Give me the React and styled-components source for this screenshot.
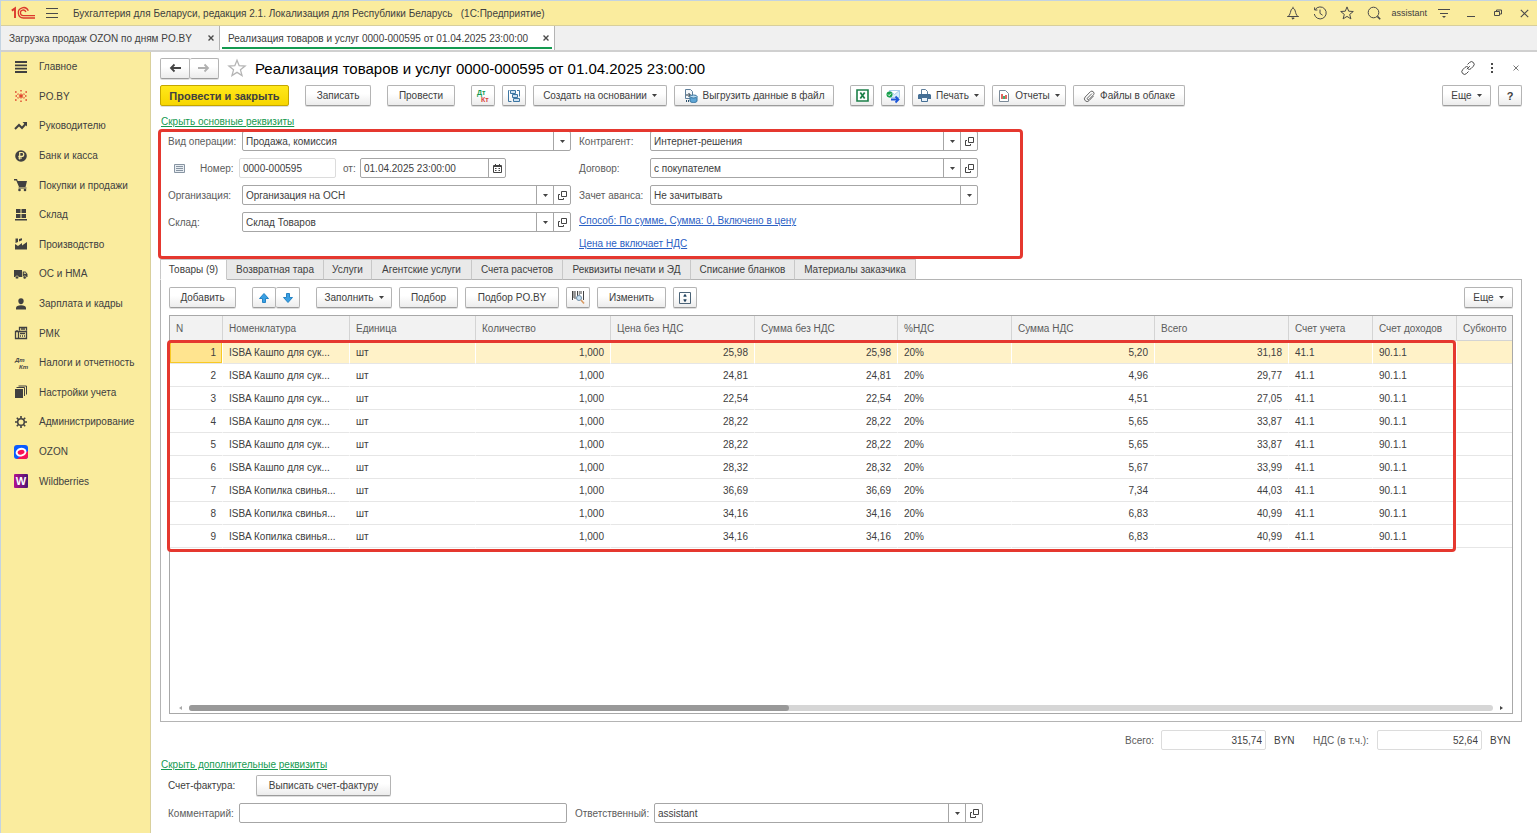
import { useState } from "react";
import styled, { createGlobalStyle, css, ThemeProvider } from "styled-components";

const theme = {
    color: {
        yellow: "#faec9e",
        text: "#404040",
        label: "#5c5c5c",
        line: "#b4b4b4",
        lightLine: "#dcdcdc",
        green: "#149a50",
        blue: "#2b61c4",
        mark: "#e5382f",
    },
    fontSize: {
        xs: "9px",
        sm: "10px",
        base: "11px",
        lg: "15px",
    },
}

const GlobalStyle = createGlobalStyle`
    * {
        box-sizing: border-box;
    }
    body {
        margin: 0;
        background: #fff;
    }
    body, button, input, select, table {
        font-family: "Liberation Sans", Arial, sans-serif;
        font-size: ${({ theme }) => theme.fontSize.sm};
        color: ${({ theme }) => theme.color.text};
    }
`

const Page = styled.div`
    display: flex;
    flex-direction: column;
    min-height: 100vh;
    border-top: 1px solid #c3d3e2;
    border-left: 1px solid #c3d3e2;
`

/* ---------- icons ---------- */

const Svg = styled.svg`
    display: block;
    flex-shrink: 0;
    overflow: visible;
`

const Icon = ({ size = 14, box = 14, children, ...rest }) => {
    return (
        <Svg
            width={size}
            height={size}
            viewBox={`0 0 ${box} ${box}`}
            fill="none"
            stroke="currentColor"
            aria-hidden="true"
            {...rest}
        >
            {children}
        </Svg>
    )
}

const Logo = () => (
    <Svg width="24" height="14" viewBox="0 0 24 14" role="img" aria-label="1С" fill="none" stroke="#dc3a2c">
        <path d="M.8 4.600 4 2.400V12" strokeWidth="1.900" />
        <path d="M17.300 4.800A5.200 5.200 0 1 0 12.400 12H24" strokeWidth="1.300" />
        <path d="M14.900 6A2.800 2.800 0 1 0 12.400 9.600H24" strokeWidth="1.300" />
    </Svg>
)

const BellIcon = () => (
    <Icon>
        <path d="M1.200 10.500h11.600M2.300 10.300C4 8.800 4.200 7 4.800 5 5.300 3.200 5.900 2.500 7 2.500S8.700 3.200 9.200 5c.6 2 .8 3.800 2.500 5.300M7 .8v1.700" />
        <path d="M5.800 12h2.400L7 13.200z" fill="currentColor" />
    </Icon>
)

const HistoryIcon = () => (
    <Icon>
        <path d="M2.200 3.600A6 6 0 1 1 1.300 8M1.600 1.400v2.600h2.800M7 3.600v3.800l2.600 1.800" />
    </Icon>
)

const StarIcon = ({ size }) => (
    <Icon size={size}>
        <path d="m7 .9 1.700 4.300 4.600.3-3.600 2.900 1.200 4.500L7 10.400l-3.900 2.500 1.200-4.500L.7 5.500l4.600-.3z" />
    </Icon>
)

const SearchIcon = () => (
    <Icon>
        <circle cx="6.500" cy="6.500" r="5.300" />
        <path d="m10.400 10.400 2.800 2.800" strokeWidth="1.600" />
    </Icon>
)

const MenuIcon = () => (
    <Icon size={12} box={12}>
        <path d="M0 1.500h12M0 6.500h12M0 10.500h12" />
    </Icon>
)

const UserMenuIcon = () => (
    <Icon size={12} box={12}>
        <path d="M0 2.500h12M2 6.500h8" />
        <path d="M4 9h4l-2 2z" fill="currentColor" stroke="none" />
    </Icon>
)

const MinimizeIcon = () => (
    <Icon size={8} box={8}>
        <path d="M0 7.500h8" />
    </Icon>
)

const RestoreIcon = () => (
    <Icon size={8} box={8}>
        <path d="M.5 2.500h5v4h-5zM2.500 2.500v-1.500h5v4h-2" />
    </Icon>
)

const CloseIcon = ({ size = 8, bold }) => (
    <Icon size={size} box={8} strokeWidth={bold ? 1.8 : 1}>
        <path d="m.7.7 6.600 6.600M7.300.7.700 7.300" />
    </Icon>
)

const LinkIcon = () => (
    <Icon>
        <path d="m5.800 8.200 3-3M6.500 3.500l2-2a2.600 2.600 0 0 1 3.900 3.700L10 7.600a2.400 2.400 0 0 1-3 .4M7.500 10.500l-2 2a2.600 2.600 0 0 1-3.900-3.700L4 6.400a2.400 2.400 0 0 1 3-.4" />
    </Icon>
)

const DotsIcon = () => (
    <Icon size={10} box={10} fill="currentColor" stroke="none">
        <path d="M4 0h2v2H4zM4 4h2v2H4zM4 8h2v2H4z" />
    </Icon>
)

const ArrowIcon = ({ back }) => (
    <Icon size={12} box={12} strokeWidth="1.800" stroke={back ? "#444" : "#b0b0b0"}>
        <path d={back ? "M12 6H2M5.500 2.500 2 6l3.500 3.500" : "M0 6h10M6.500 2.500 10 6 6.500 9.500"} />
    </Icon>
)

const Caret = () => (
    <Icon size={5} box={5}>
        <path d="M0 1h5L2.500 4z" fill="currentColor" stroke="none" />
    </Icon>
)

const OpenIcon = () => (
    <Icon size={9} box={9}>
        <path d="M3.500.500h5v5h-5zM2 3.500H.500v5h5V7" />
    </Icon>
)

const CalendarIcon = () => (
    <Icon size={9} box={9}>
        <path d="M.500 1.500h8v7h-8zM.500 2.500h8M2.500 0v2M6.500 0v2" />
        <path d="M2 4.500h1.500M5.500 4.500H7M2 6.500h1.500M5.500 6.500H7" />
    </Icon>
)

const CardIcon = () => (
    <Icon size={11} box={11} stroke="#8794a2">
        <path d="M.500 1.500h10v8H.500z" fill="#e8edf2" />
        <path d="M2 3.500h7M2 5.500h7M2 7.500h7" />
    </Icon>
)

const DtKtIcon = ({ colored }) => (
    <Icon stroke="none" fontSize={colored ? 7 : 6} fontWeight="700" fontStyle={colored ? "normal" : "italic"}>
        <text x="1" y="6" fill={colored ? "#149a50" : "#444"}>Дт</text>
        <text x="5" y="13" fill={colored ? "#d9403a" : "#444"}>Кт</text>
    </Icon>
)

const StructureIcon = () => (
    <Icon size={12} box={12} stroke="#3d76a3">
        <path d="M2.500.500h5v3h-5zM4.500 4.500h5v3h-5zM5.500 8.500h6v3h-6z" fill="#cfe2f1" />
        <path d="M1.500.500h-1v11h3M9 .500h2.500v6" />
    </Icon>
)

const ExportIcon = () => (
    <Icon>
        <path d="M1.500.500h5l2 2v7h-7z" fill="#f4f7fa" stroke="#5e7f9b" />
        <path d="M2 6h4M4.500 4l2 2-2 2" stroke="#20323f" />
        <path d="M6 7.500v4.500c0 2 7 2 7 0V7.500" fill="#5fa6d6" stroke="#37749f" />
        <ellipse cx="9.500" cy="7.500" rx="3.500" ry="1.500" fill="#b7dbf2" stroke="#37749f" />
        <path d="M2.500 11v2M4.500 11v2" stroke="#2a4f6b" />
    </Icon>
)

const ExcelIcon = () => (
    <Icon size={13} box={13}>
        <path d="M1 1h11v11H1z" fill="#fff" stroke="#1c8049" strokeWidth="1.600" />
        <path d="m4.300 3.500 4.400 6M8.700 3.500l-4.400 6" stroke="#1c8049" strokeWidth="1.800" />
    </Icon>
)

const MailIcon = () => (
    <Icon>
        <path d="M3.500 1.500h10v7h-10zM3.500 1.500l5 4 5-4" fill="#d8ecfb" stroke="#a9cdea" />
        <circle cx="3.500" cy="5.500" r="3" fill="#17a04b" stroke="none" />
        <path d="m2 5.500 1.200 1.200L5 4.500" stroke="#fff" />
        <path d="M5 10.500h7M9.500 7.500l3 3-3 3" stroke="#1d56d8" strokeWidth="1.800" />
    </Icon>
)

const PrinterIcon = () => (
    <Icon size={13} box={13}>
        <path d="M3.500 5V.500h4l2 2V5" fill="#fff" stroke="#5f7f9c" />
        <path d="M1 5h11l1 1v4H0V6z" fill="#456f95" stroke="none" />
        <path d="M3.500 8.500h6v4h-6z" fill="#e9f2fa" stroke="#456f95" />
    </Icon>
)

const ReportIcon = () => (
    <Icon size={12} box={12}>
        <path d="M1.500.500h6l3 3v8h-9z" fill="#fff" stroke="#7b8a98" />
        <path d="M4 4v5" stroke="#d9403a" strokeWidth="1.600" />
        <path d="M6 6v3" stroke="#149a50" strokeWidth="1.600" />
        <path d="M8 5v4" stroke="#d9403a" strokeWidth="1.600" />
    </Icon>
)

const ClipIcon = () => (
    <Icon size={12} box={12} stroke="#666">
        <path d="M9 3.500 4.500 8a1 1 0 0 0 1.500 1.400l4.500-4.600A2.200 2.200 0 0 0 7.400 1.700L2.200 7A2.600 2.600 0 0 0 6 10.700L10.500 6" />
    </Icon>
)

const MoveIcon = ({ down }) => (
    <Icon size={10} box={10}>
        <path
            d={down ? "M3.500.500h3v4h3L5 9.500.500 4.500h3z" : "M3.500 9.500h3v-4h3L5 .500.500 5.500h3z"}
            fill="#3aa0e4"
            stroke="#2583c4"
        />
    </Icon>
)

const BarcodeIcon = () => (
    <Icon size={13} box={13} stroke="#444">
        <path d="M.500 0v9M3 0v8M5.500 0v5M9 0v3M11.500 0v9" />
        <path d="M1.800 0v7M7.300 0v4" strokeWidth=".7" />
        <circle cx="7" cy="7" r="2.500" fill="#cbe4f6" stroke="#6f8ca5" />
        <path d="m9 9 3 3.500" stroke="#d89a62" strokeWidth="1.600" />
    </Icon>
)

const ExpandIcon = () => (
    <Icon size={12} box={12}>
        <path d="M.500.500h11v11H.500z" stroke="#4b6377" />
        <path d="M6 2.500v2.500M6 7v2.500" stroke="#22445f" />
        <path d="M4 4.500 6 2l2 2.500zM4 7.500 6 10l2-2.500z" fill="#22445f" stroke="none" />
    </Icon>
)

const sectionIcons = {
    main: (
        <Icon>
            <path d="M1 2h12M1 5.300h12M1 8.700h12M1 12h12" strokeWidth="1.800" />
        </Icon>
    ),
    po: (
        <Icon stroke="#e0452c">
            <path d="M7 4.500v5M5 5.700l4 2.600M9 5.700 5 8.300" strokeWidth="1.200" />
            <path d="M7 1v1.600M7 11.400V13M1 3h1.600M11.400 3H13M1 11h1.600M11.400 11H13M1.500 7H3M11 7h1.500M3.500 4.800l1 .6M9.500 5.400l1-.6M3.500 9.200l1-.6M9.500 8.600l1 .6" strokeWidth="1.400" />
        </Icon>
    ),
    trend: (
        <Icon>
            <path d="m1 10 4-4 3 3 4-4.500" strokeWidth="2" />
            <path d="M8.500 3H13v4.500z" fill="currentColor" stroke="none" />
        </Icon>
    ),
    bank: (
        <Icon>
            <circle cx="7" cy="7" r="5.800" fill="currentColor" stroke="none" />
            <path d="M5.700 10.500v-7h2.100a1.900 1.900 0 0 1 0 3.900H4.300M4.300 9h3.700" stroke="#faec9e" strokeWidth="1.200" />
        </Icon>
    ),
    cart: (
        <Icon>
            <path d="M0 1h3l.7 2H13l-1.500 6H5L2.300 2.400H0z" fill="currentColor" stroke="none" />
            <path d="M4.500 10h8" />
            <circle cx="5.500" cy="12" r="1.300" fill="currentColor" stroke="none" />
            <circle cx="11" cy="12" r="1.300" fill="currentColor" stroke="none" />
        </Icon>
    ),
    stock: (
        <Icon>
            <path d="M2 1h4.500v4H2zM7.500 1H12v4H7.500zM2 6h4.500v4H2zM7.500 6H12v4H7.500zM1 11h12v1.500H1z" fill="currentColor" stroke="none" />
        </Icon>
    ),
    factory: (
        <Icon>
            <path d="M1 12.500V7l3 2 4-3v2.500L13 5v7.500z" fill="currentColor" stroke="none" />
            <path d="M1.500 1.500h2.500v3.500L1.500 6zM5 2l3-.800v2L5 4.500z" fill="currentColor" stroke="none" />
        </Icon>
    ),
    truck: (
        <Icon>
            <path d="M0 3h8v7H0zM8.700 4.500h2.800L13.500 7v3H8.700z" fill="currentColor" stroke="none" />
            <circle cx="3" cy="10.500" r="1.600" fill="currentColor" stroke="#faec9e" strokeWidth=".6" />
            <circle cx="10.700" cy="10.500" r="1.600" fill="currentColor" stroke="#faec9e" strokeWidth=".6" />
            <path d="M9.800 5.500h1.500l1 1.300H9.800z" fill="#faec9e" stroke="none" />
        </Icon>
    ),
    person: (
        <Icon>
            <path d="M7 1.200c1.900 0 2.700 1.300 2.700 2.900S8.600 7.300 7 7.300 4.300 5.700 4.300 4.100 5.100 1.200 7 1.200zM2 12.500V11c0-1.800 2-2.800 5-2.800s5 1 5 2.800v1.500z" fill="currentColor" stroke="none" />
        </Icon>
    ),
    register: (
        <Icon>
            <path d="M5.500 4.500v-3h7v3M1.500 5.500h11v7h-11zM4.500 5.500v7M3 4v1.500" strokeWidth="1.300" />
            <path d="M6 7.500h5M6 10h1M8 10h1M10 10h1M7 3h4" strokeWidth="1.400" />
        </Icon>
    ),
    taxes: <DtKtIcon />,
    books: (
        <Icon>
            <path d="M1 4h8v9H1z" fill="currentColor" stroke="none" />
            <path d="M2.500 2.500h8V11M4.500 1h8v8.500" />
        </Icon>
    ),
    gear: (
        <Icon>
            <circle cx="7" cy="7" r="3.300" strokeWidth="1.500" />
            <path d="M7 1v2M7 11v2M1 7h2M11 7h2M2.800 2.800l1.400 1.400M9.800 9.800l1.400 1.400M11.200 2.800 9.800 4.200M4.200 9.800l-1.400 1.400" strokeWidth="1.600" />
        </Icon>
    ),
    ozon: (
        <Icon>
            <rect width="14" height="14" rx="3" fill="#0a5bff" stroke="none" />
            <path d="M14 6v5a3 3 0 0 1-3 3H3l4-3z" fill="#f91155" stroke="none" />
            <ellipse cx="7" cy="7.200" rx="4.500" ry="3.300" fill="#f91155" stroke="#fff" strokeWidth="2" transform="rotate(-15 7 7)" />
        </Icon>
    ),
    wb: (
        <Icon>
            <defs>
                <linearGradient id="wb" x1="0" x2="1">
                    <stop offset="0" stopColor="#b3128f" />
                    <stop offset="1" stopColor="#4a1673" />
                </linearGradient>
            </defs>
            <rect width="14" height="14" rx="1" fill="url(#wb)" stroke="none" />
            <text x="7" y="11" fontSize="11" fontWeight="700" textAnchor="middle" fill="#fff" stroke="none">W</text>
        </Icon>
    ),
}

/* ---------- window header ---------- */

const TopBar = styled.header`
    display: flex;
    align-items: center;
    height: 25px;
    padding-left: 10px;
    background: ${({ theme }) => theme.color.yellow};
    border-bottom: 1px solid #d8cf9c;
`

const IconButton = styled.button`
    display: flex;
    align-items: center;
    justify-content: center;
    width: ${({ $w }) => $w || 27}px;
    height: 22px;
    padding: 0;
    border: 0;
    background: none;
    color: #4a4a4a;
`

const AppTitle = styled.div`
    flex: 1;
    padding-left: 4px;
    white-space: pre;
`

const UserName = styled.span`
    padding: 0 3px 0 4px;
    font-size: ${({ theme }) => theme.fontSize.xs};
`

const DocTabs = styled.nav`
    display: flex;
    height: 26px;
    background: #f0f0f0;
    border-bottom: 2px solid #d0d0d0;
`

const DocTab = styled.div`
    display: flex;
    align-items: center;
    justify-content: space-between;
    width: ${({ $w }) => $w}px;
    height: 24px;
    padding: 0 5px 0 8px;
    border-right: 1px solid ${({ theme }) => theme.color.line};
    white-space: nowrap;
    ${({ $active, theme }) => $active && css`
        background: linear-gradient(${theme.color.green}, ${theme.color.green}) center bottom 1px / calc(100% - 4px) 2px no-repeat #fff;
    `}
    a {
        color: inherit;
        text-decoration: none;
    }
    button {
        width: 7px;
    }
`

/* ---------- sections ---------- */

const Body = styled.div`
    display: flex;
    flex: 1;
`

const Sidebar = styled.aside`
    flex: 0 0 150px;
    background: ${({ theme }) => theme.color.yellow};
    border-right: 1px solid #d9d09c;
`

const SectionList = styled.nav`
    display: grid;
    grid-auto-rows: 1fr;
    height: 444px;
`

const SectionLink = styled.a`
    display: flex;
    align-items: center;
    gap: 11px;
    padding-left: 13px;
    color: ${({ theme }) => theme.color.text};
    text-decoration: none;
    white-space: nowrap;
`

/* ---------- form ---------- */

const Main = styled.main`
    display: flex;
    flex: 1;
    flex-direction: column;
    min-width: 0;
    padding: 5px 15px 10px 9px;
`

const TitleRow = styled.div`
    display: flex;
    align-items: center;
    height: 22px;
    margin-right: -6px;
`

const Title = styled.h1`
    flex: 1;
    margin: 0;
    font-size: ${({ theme }) => theme.fontSize.lg};
    font-weight: 400;
    color: #000;
`

const FavoriteButton = styled(IconButton)`
    width: 36px;
    color: #b5b5b5;
`

const CommandBar = styled.div`
    display: flex;
    gap: 16px;
    margin-top: 6px;
`

const Group = styled.div`
    display: flex;
    gap: ${({ $joined }) => ($joined ? 0 : 7)}px;
    margin-left: ${({ $right }) => ($right ? "auto" : 0)};
`

const Button = styled.button`
    display: flex;
    align-items: center;
    justify-content: center;
    gap: 5px;
    width: ${({ $w }) => $w || 24}px;
    height: 21px;
    padding: 0;
    border: 1px solid ${({ theme }) => theme.color.line};
    border-bottom-color: #9c9c9c;
    border-left-width: ${({ $inner }) => ($inner ? 0 : 1)}px;
    border-radius: 2px;
    background: linear-gradient(#fff 40%, #ececec);
    box-shadow: 0 1px 0 #dedede;
    white-space: nowrap;
    ${({ $primary }) => $primary && css`
        border-color: #c4a600;
        background: linear-gradient(#ffe81a, #f7d600);
        font-size: ${({ theme }) => theme.fontSize.base};
        font-weight: 700;
    `}
`

const HelpMark = styled.b`
    font-size: ${({ theme }) => theme.fontSize.base};
`

const CommandLink = styled.div`
    display: flex;
    margin-top: 9px;
`

const ToggleLink = styled.a`
    align-self: flex-start;
    margin-left: 1px;
    line-height: 14px;
    color: ${({ theme }) => theme.color.green};
`

const ParamLink = styled.a`
    line-height: 14px;
    color: ${({ theme }) => theme.color.blue};
`

const marked = css`
    position: absolute;
    border: 3px solid ${({ theme }) => theme.color.mark};
    border-radius: 4px;
    pointer-events: none;
    content: "";
`

const Params = styled.section`
    position: relative;
    display: flex;
    align-self: flex-start;
    gap: 8px;
    margin-top: 2px;
    padding: 0 45px 8px 8px;
    &::after {
        ${marked}
        inset: -2px 0 0 -2px;
    }
`

const ParamColumn = styled.div`
    display: flex;
    flex-direction: column;
    gap: 7px;
    width: ${({ $w }) => $w}px;
`

const ParamLinks = styled.div`
    display: flex;
    flex-direction: column;
    align-items: flex-start;
    gap: 9px;
    padding-top: 2px;
`

const Row = styled.div`
    display: flex;
    align-items: center;
`

const Label = styled.label`
    flex-shrink: 0;
    width: ${({ $w }) => ($w ? `${$w}px` : "auto")};
    color: ${({ theme }) => theme.color.label};
    white-space: nowrap;
`

const Field = styled.div`
    display: flex;
    flex: ${({ $w }) => ($w ? `0 0 ${$w}px` : 1)};
    min-width: 0;
    height: 20px;
    border: 1px solid ${({ theme, $light }) => ($light ? theme.color.lightLine : "#a6a6a6")};
    border-radius: 2px;
    background: #fff;
    input, select {
        flex: 1;
        min-width: 0;
        padding: 0 3px;
        border: 0;
        outline: 0;
        background: none;
        appearance: none;
        text-align: ${({ $right }) => ($right ? "right" : "left")};
    }
`

const fieldCell = css`
    display: flex;
    align-items: center;
    justify-content: center;
    width: 17px;
    padding: 0;
    border: 0;
    border-left: 1px solid #a6a6a6;
    background: none;
    color: #444;
`

const FieldArrow = styled.span`
    ${fieldCell}
`

const FieldButton = styled.button`
    ${fieldCell}
`

const NumberLabel = styled(Label)`
    display: flex;
    align-items: center;
    gap: 15px;
    padding-left: 6px;
`

const DateLabel = styled(Label)`
    padding-left: 7px;
`

const SelectField = ({ id, value, open, width }) => {
    return (
        <Field $w={width}>
            <select id={id} defaultValue={value}>
                <option>{value}</option>
            </select>
            <FieldArrow aria-hidden="true"><Caret /></FieldArrow>
            {open && <FieldButton type="button" aria-label="Открыть"><OpenIcon /></FieldButton>}
        </Field>
    )
}

/* ---------- tabular part ---------- */

const Tabs = styled.div`
    z-index: 1;
    display: flex;
`

const Tab = styled.button`
    width: ${({ $w }) => $w}px;
    height: 21px;
    padding: 0;
    border: 1px solid #c8c8c8;
    border-left-width: ${({ $active }) => ($active ? 1 : 0)}px;
    border-bottom-color: ${({ theme, $active }) => ($active ? "#fff" : theme.color.line)};
    background: ${({ $active }) => ($active ? "#fff" : "#e9e9e9")};
    white-space: nowrap;
`

const Panel = styled.section`
    display: flex;
    flex: 1;
    flex-direction: column;
    margin-top: -1px;
    padding: 7px 8px;
    border: 1px solid ${({ theme }) => theme.color.line};
`

const PanelBar = styled.div`
    display: flex;
    gap: 16px;
`

const Grid = styled.div`
    position: relative;
    display: flex;
    flex: 1;
    flex-direction: column;
    min-height: 260px;
    margin-top: 7px;
    border: 1px solid #a8a8a8;
`

const RowsMark = styled.div`
    ${marked}
    top: 24px;
    left: -3px;
    width: 1289px;
    height: 212px;
`

const TableWrap = styled.div`
    flex: 1;
    overflow: hidden;
`

const Table = styled.table`
    width: 100%;
    table-layout: fixed;
    border-collapse: separate;
    border-spacing: 0;
    th, td {
        overflow: hidden;
        padding: 0 0 0 6px;
        font-weight: 400;
        text-align: left;
        text-overflow: ellipsis;
        white-space: nowrap;
    }
    th {
        height: 25px;
        border-right: 1px solid #d4d4d4;
        border-bottom: 1px solid #d4d4d4;
        background: #f2f2f2;
        color: ${({ theme }) => theme.color.label};
    }
    th:last-child, td:last-child {
        border-right: 0;
    }
`

const Line = styled.tr`
    td {
        height: 23px;
        border-bottom: 1px solid #e6e6e6;
        border-right: 1px solid #fff;
        background: ${({ $selected }) => ($selected ? "#fff2c8" : "#fff")};
    }
    td:first-child {
        ${({ $selected }) => $selected && css`
            background: #ffe48f;
            box-shadow: inset 0 0 0 1px #f8c923;
        `}
    }
`

const Cell = styled.td`
    && {
        padding-right: ${({ $num }) => ($num ? 6 : 0)}px;
        text-align: ${({ $num }) => ($num ? "right" : "left")};
    }
`

const ScrollRow = styled.div`
    display: flex;
    align-items: center;
    gap: 7px;
    height: 11px;
    padding: 0 7px;
`

const ScrollTrack = styled.div`
    flex: 1;
    height: 6px;
    border-radius: 3px;
    background: #d6d6d6;
`

const ScrollThumb = styled.div`
    width: 46%;
    height: 6px;
    border-radius: 3px;
    background: #999;
`

const ScrollArrow = styled.span`
    border: 2px solid transparent;
    border-${({ $side }) => $side}: 3px solid ${({ $side }) => ($side === "left" ? "#444" : "#aaa")};
`

/* ---------- footer ---------- */

const Totals = styled.div`
    display: flex;
    align-items: center;
    justify-content: flex-end;
    gap: 5px;
    margin: 8px 0;
    padding-right: 10px;
`

const Currency = styled.span`
    width: 37px;
    padding-left: 3px;
    &:last-child {
        width: 25px;
    }
`

const Footer = styled.footer`
    display: flex;
    flex-direction: column;
    gap: 7px;
    margin-top: 3px;
`

const FooterRow = styled(Row)`
    padding-left: 8px;
`

const InvoiceLabel = styled.span`
    width: 88px;
`

const ResponsibleLabel = styled(Label)`
    padding-left: 8px;
`

const sections = [
    ["main", "Главное"],
    ["po", "PO.BY"],
    ["trend", "Руководителю"],
    ["bank", "Банк и касса"],
    ["cart", "Покупки и продажи"],
    ["stock", "Склад"],
    ["factory", "Производство"],
    ["truck", "ОС и НМА"],
    ["person", "Зарплата и кадры"],
    ["register", "РМК"],
    ["taxes", "Налоги и отчетность"],
    ["books", "Настройки учета"],
    ["gear", "Администрирование"],
    ["ozon", "OZON"],
    ["wb", "Wildberries"],
]

const tabs = [
    ["Товары (9)", 67],
    ["Возвратная тара", 97],
    ["Услуги", 48],
    ["Агентские услуги", 100],
    ["Счета расчетов", 91],
    ["Реквизиты печати и ЭД", 128],
    ["Списание бланков", 104],
    ["Материалы заказчика", 121],
]

const columns = [
    { title: "N", width: 53, num: true },
    { title: "Номенклатура", width: 127 },
    { title: "Единица", width: 126 },
    { title: "Количество", width: 135, num: true },
    { title: "Цена без НДС", width: 144, num: true },
    { title: "Сумма без НДС", width: 143, num: true },
    { title: "%НДС", width: 114 },
    { title: "Сумма НДС", width: 143, num: true },
    { title: "Всего", width: 134, num: true },
    { title: "Счет учета", width: 84 },
    { title: "Счет доходов", width: 84 },
    { title: "Субконто" },
]

const pot = "ISBA Кашпо для сук..."
const pig = "ISBA Копилка свинья..."

// name, price, vat, total
const goods = [
    [pot, "25,98", "5,20", "31,18"],
    [pot, "24,81", "4,96", "29,77"],
    [pot, "22,54", "4,51", "27,05"],
    [pot, "28,22", "5,65", "33,87"],
    [pot, "28,22", "5,65", "33,87"],
    [pot, "28,32", "5,67", "33,99"],
    [pig, "36,69", "7,34", "44,03"],
    [pig, "34,16", "6,83", "40,99"],
    [pig, "34,16", "6,83", "40,99"],
]

const GoodsTable = () => {
    const [selected, setSelected] = useState(0);

    return (
        <TableWrap>
            <Table>
                <colgroup>
                    {columns.map((column) => (
                        <col key={column.title} width={column.width} />
                    ))}
                </colgroup>
                <thead>
                    <tr>
                        {columns.map((column) => (
                            <th key={column.title} scope="col">{column.title}</th>
                        ))}
                    </tr>
                </thead>
                <tbody>
                    {goods.map(([name, price, vat, total], index) => {
                        const cells = [index + 1, name, "шт", "1,000", price, price, "20%", vat, total, "41.1", "90.1.1", ""]
                        return (
                            <Line key={index} $selected={index === selected} onClick={() => setSelected(index)}>
                                {cells.map((cell, i) => (
                                    <Cell key={i} $num={columns[i].num}>{cell}</Cell>
                                ))}
                            </Line>
                        )
                    })}
                </tbody>
            </Table>
        </TableWrap>
    )
}

const App = () => {
    const [activeTab, setActiveTab] = useState(0);

    return (
        <ThemeProvider theme={theme}>
            <GlobalStyle />
            <Page>
                <TopBar>
                    <Logo />
                    <IconButton $w={34} aria-label="Меню"><MenuIcon /></IconButton>
                    <AppTitle>{"Бухгалтерия для Беларуси, редакция 2.1. Локализация для Республики Беларусь   (1С:Предприятие)"}</AppTitle>
                    <IconButton aria-label="Уведомления"><BellIcon /></IconButton>
                    <IconButton aria-label="История"><HistoryIcon /></IconButton>
                    <IconButton aria-label="Избранное"><StarIcon /></IconButton>
                    <IconButton aria-label="Поиск"><SearchIcon /></IconButton>
                    <UserName>assistant</UserName>
                    <IconButton aria-label="Настройки"><UserMenuIcon /></IconButton>
                    <IconButton aria-label="Свернуть"><MinimizeIcon /></IconButton>
                    <IconButton aria-label="Развернуть"><RestoreIcon /></IconButton>
                    <IconButton $w={26} aria-label="Закрыть"><CloseIcon size={9} /></IconButton>
                </TopBar>

                <DocTabs>
                    <DocTab $w={219}>
                        <a href="#load">Загрузка продаж OZON по дням PO.BY</a>
                        <IconButton aria-label="Закрыть вкладку"><CloseIcon size={6} bold /></IconButton>
                    </DocTab>
                    <DocTab $w={335} $active>
                        <a href="#sale">Реализация товаров и услуг 0000-000595 от 01.04.2025 23:00:00</a>
                        <IconButton aria-label="Закрыть вкладку"><CloseIcon size={6} bold /></IconButton>
                    </DocTab>
                </DocTabs>

                <Body>
                    <Sidebar>
                        <SectionList>
                            {sections.map(([icon, name]) => (
                                <SectionLink key={icon} href={`#${icon}`}>
                                    {sectionIcons[icon]}
                                    {name}
                                </SectionLink>
                            ))}
                        </SectionList>
                    </Sidebar>

                    <Main>
                        <TitleRow>
                            <Group $joined>
                                <Button $w={30} aria-label="Назад"><ArrowIcon back /></Button>
                                <Button $w={29} $inner aria-label="Вперед"><ArrowIcon /></Button>
                            </Group>
                            <FavoriteButton aria-label="В избранное"><StarIcon size={18} /></FavoriteButton>
                            <Title>Реализация товаров и услуг 0000-000595 от 01.04.2025 23:00:00</Title>
                            <IconButton $w={24} aria-label="Ссылка"><LinkIcon /></IconButton>
                            <IconButton $w={24} aria-label="Еще"><DotsIcon /></IconButton>
                            <IconButton $w={24} aria-label="Закрыть"><CloseIcon size={6} /></IconButton>
                        </TitleRow>

                        <CommandBar>
                            <Button $w={129} $primary>Провести и закрыть</Button>
                            <Button $w={66}>Записать</Button>
                            <Button $w={68}>Провести</Button>
                            <Group>
                                <Button aria-label="Проводки"><DtKtIcon colored /></Button>
                                <Button aria-label="Структура подчиненности"><StructureIcon /></Button>
                                <Button $w={134}>Создать на основании <Caret /></Button>
                                <Button $w={160}><ExportIcon />Выгрузить данные в файл</Button>
                            </Group>
                            <Group>
                                <Button aria-label="Excel"><ExcelIcon /></Button>
                                <Button aria-label="Отправить"><MailIcon /></Button>
                                <Button $w={73}><PrinterIcon />Печать <Caret /></Button>
                                <Button $w={74}><ReportIcon />Отчеты <Caret /></Button>
                                <Button $w={112}><ClipIcon />Файлы в облаке</Button>
                            </Group>
                            <Group $right>
                                <Button $w={49}>Еще <Caret /></Button>
                                <Button aria-label="Справка"><HelpMark>?</HelpMark></Button>
                            </Group>
                        </CommandBar>

                        <CommandLink>
                            <ToggleLink href="#params">Скрыть основные реквизиты</ToggleLink>
                        </CommandLink>

                        <Params id="params">
                            <ParamColumn $w={403}>
                                <Row>
                                    <Label $w={74} htmlFor="operation">Вид операции:</Label>
                                    <SelectField id="operation" value="Продажа, комиссия" />
                                </Row>
                                <Row>
                                    <NumberLabel $w={71} htmlFor="number"><CardIcon />Номер:</NumberLabel>
                                    <Field $w={97} $light>
                                        <input id="number" defaultValue="0000-000595" />
                                    </Field>
                                    <DateLabel $w={24} htmlFor="date">от:</DateLabel>
                                    <Field $w={146}>
                                        <input id="date" defaultValue="01.04.2025 23:00:00" />
                                        <FieldButton aria-label="Календарь"><CalendarIcon /></FieldButton>
                                    </Field>
                                </Row>
                                <Row>
                                    <Label $w={74} htmlFor="organization">Организация:</Label>
                                    <SelectField id="organization" value="Организация на ОСН" open />
                                </Row>
                                <Row>
                                    <Label $w={74} htmlFor="warehouse">Склад:</Label>
                                    <SelectField id="warehouse" value="Склад Товаров" open />
                                </Row>
                            </ParamColumn>
                            <ParamColumn $w={399}>
                                <Row>
                                    <Label $w={71} htmlFor="partner">Контрагент:</Label>
                                    <SelectField id="partner" value="Интернет-решения" open />
                                </Row>
                                <Row>
                                    <Label $w={71} htmlFor="contract">Договор:</Label>
                                    <SelectField id="contract" value="с покупателем" open />
                                </Row>
                                <Row>
                                    <Label $w={71} htmlFor="advance">Зачет аванса:</Label>
                                    <SelectField id="advance" value="Не зачитывать" />
                                </Row>
                                <ParamLinks>
                                    <ParamLink href="#discount">Способ: По сумме, Сумма: 0, Включено в цену</ParamLink>
                                    <ParamLink href="#vat">Цена не включает НДС</ParamLink>
                                </ParamLinks>
                            </ParamColumn>
                        </Params>

                        <Tabs role="tablist">
                            {tabs.map(([name, width], index) => (
                                <Tab
                                    key={name}
                                    role="tab"
                                    aria-selected={index === activeTab}
                                    $w={width}
                                    $active={index === activeTab}
                                    onClick={() => setActiveTab(index)}
                                >
                                    {name}
                                </Tab>
                            ))}
                        </Tabs>

                        <Panel>
                            <PanelBar>
                                <Button $w={67}>Добавить</Button>
                                <Group $joined>
                                    <Button aria-label="Вверх"><MoveIcon /></Button>
                                    <Button $inner aria-label="Вниз"><MoveIcon down /></Button>
                                </Group>
                                <Group>
                                    <Button $w={76}>Заполнить <Caret /></Button>
                                    <Button $w={59}>Подбор</Button>
                                    <Button $w={94}>Подбор PO.BY</Button>
                                    <Button aria-label="Штрихкод"><BarcodeIcon /></Button>
                                    <Button $w={69}>Изменить</Button>
                                    <Button aria-label="Развернуть таблицу"><ExpandIcon /></Button>
                                </Group>
                                <Group $right>
                                    <Button $w={49}>Еще <Caret /></Button>
                                </Group>
                            </PanelBar>
                            <Grid>
                                <GoodsTable />
                                <ScrollRow>
                                    <ScrollArrow $side="right" />
                                    <ScrollTrack>
                                        <ScrollThumb />
                                    </ScrollTrack>
                                    <ScrollArrow $side="left" />
                                </ScrollRow>
                                <RowsMark />
                            </Grid>
                        </Panel>

                        <Totals>
                            <Label $w={31} htmlFor="total">Всего:</Label>
                            <Field $w={105} $light $right>
                                <input id="total" defaultValue="315,74" />
                            </Field>
                            <Currency>BYN</Currency>
                            <Label $w={59} htmlFor="vatTotal">НДС (в т.ч.):</Label>
                            <Field $w={105} $light $right>
                                <input id="vatTotal" defaultValue="52,64" />
                            </Field>
                            <Currency>BYN</Currency>
                        </Totals>

                        <ToggleLink href="#extra">Скрыть дополнительные реквизиты</ToggleLink>
                        <Footer id="extra">
                            <FooterRow>
                                <InvoiceLabel>Счет-фактура:</InvoiceLabel>
                                <Button $w={135}>Выписать счет-фактуру</Button>
                            </FooterRow>
                            <FooterRow>
                                <Label $w={71} htmlFor="comment">Комментарий:</Label>
                                <Field $w={328}>
                                    <input id="comment" />
                                </Field>
                                <ResponsibleLabel $w={87} htmlFor="responsible">Ответственный:</ResponsibleLabel>
                                <SelectField id="responsible" value="assistant" width={329} open />
                            </FooterRow>
                        </Footer>
                    </Main>
                </Body>
            </Page>
        </ThemeProvider>
    )
}

export default App;
